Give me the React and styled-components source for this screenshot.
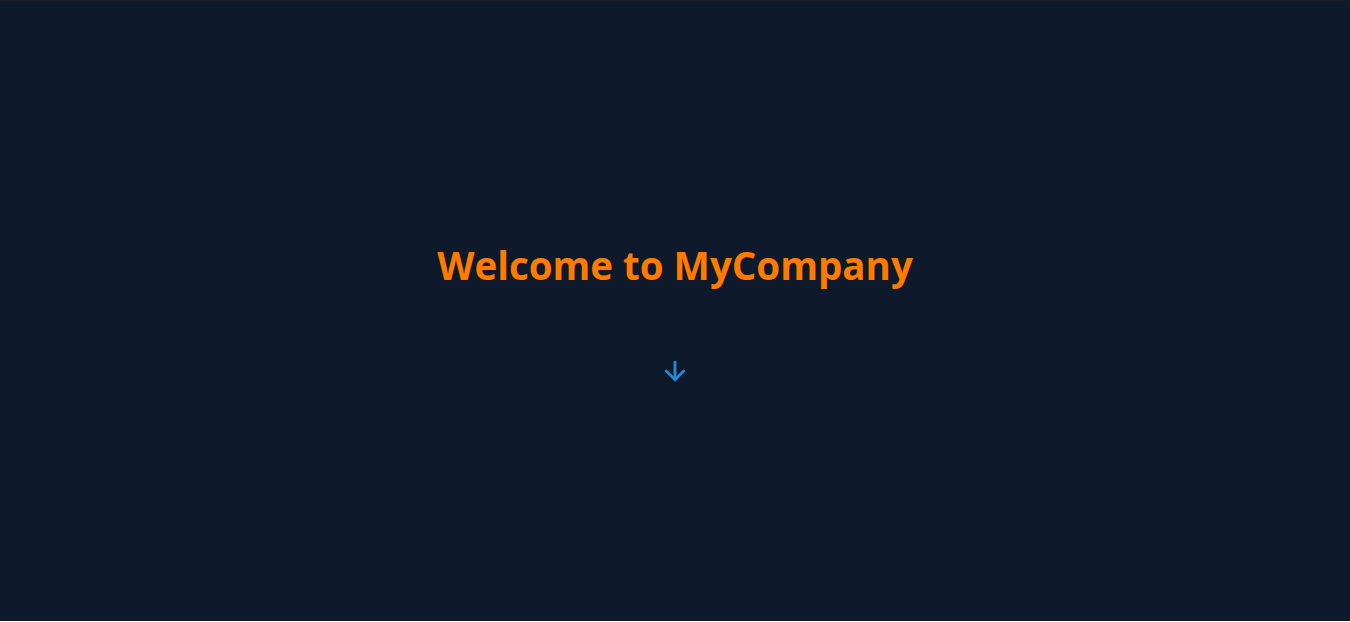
import React from "react"
import styled, { createGlobalStyle } from "styled-components"
import { ArrowDown } from "lucide-react"

const GlobalStyle = createGlobalStyle`
  html, body {
    margin: 0;
    padding: 0;
    background: #ffffff;
  }
`

const Hero = styled.section`
  height: 620px;
  border-top: 1px solid #1b1c1f;
  background: #0e1a2b;
  display: flex;
  flex-direction: column;
  align-items: center;
  justify-content: center;
  font-family: "Open Sans", "Noto Sans", sans-serif;
`

const Title = styled.h1`
  margin: 0;
  padding-top: 3px;
  font-size: 38.5px;
  font-weight: 700;
  color: #ff7b00;
  letter-spacing: 0;
`

const ScrollHint = styled.div`
  margin-top: 65px;
  color: #2a86d4;
  display: flex;
`

const App = () => {
  return (
    <>
      <GlobalStyle />
      <Hero>
        <Title>Welcome to MyCompany</Title>
        <ScrollHint>
          <ArrowDown size={30} strokeWidth={2.3} />
        </ScrollHint>
      </Hero>
    </>
  )
}

export default App
